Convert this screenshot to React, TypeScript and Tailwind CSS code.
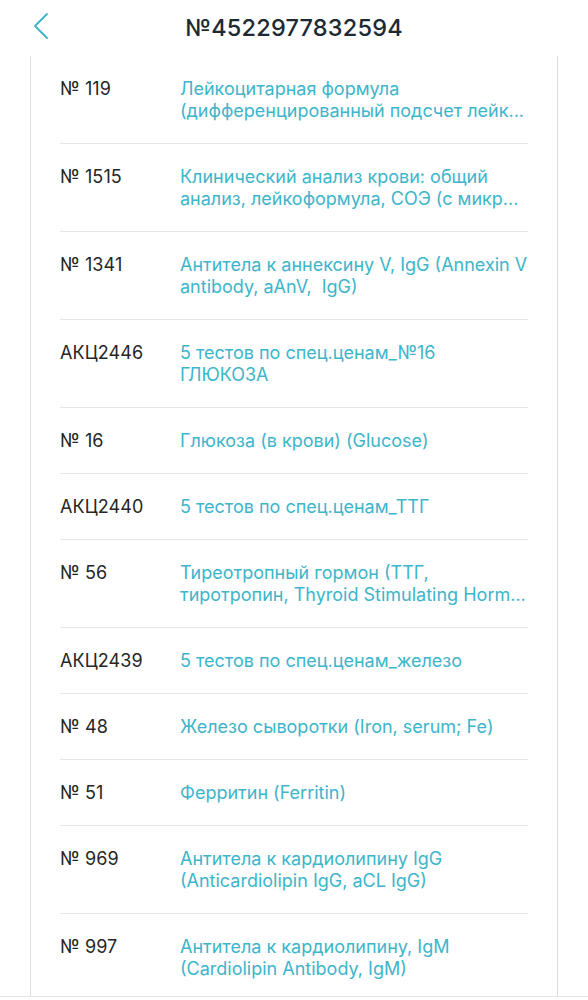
type Item = { code: string; lines: string[] }

const ITEMS: Item[] = [
  { code: "№ 119", lines: ["Лейкоцитарная формула", "(дифференцированный подсчет лейк..."] },
  { code: "№ 1515", lines: ["Клинический анализ крови: общий", "анализ, лейкоформула, СОЭ (с микр..."] },
  { code: "№ 1341", lines: ["Антитела к аннексину V, IgG (Annexin V", "antibody, aAnV,  IgG)"] },
  { code: "АКЦ2446", lines: ["5 тестов по спец.ценам_№16", "ГЛЮКОЗА"] },
  { code: "№ 16", lines: ["Глюкоза (в крови) (Glucose)"] },
  { code: "АКЦ2440", lines: ["5 тестов по спец.ценам_ТТГ"] },
  { code: "№ 56", lines: ["Тиреотропный гормон (ТТГ,", "тиротропин, Thyroid Stimulating Horm..."] },
  { code: "АКЦ2439", lines: ["5 тестов по спец.ценам_железо"] },
  { code: "№ 48", lines: ["Железо сыворотки (Iron, serum; Fe)"] },
  { code: "№ 51", lines: ["Ферритин (Ferritin)"] },
  { code: "№ 969", lines: ["Антитела к кардиолипину IgG", "(Anticardiolipin IgG, aCL IgG)"] },
  { code: "№ 997", lines: ["Антитела к кардиолипину, IgM", "(Cardiolipin Antibody, IgM)"] },
]

export default function App() {
  return (
    <div className="h-[1000px] flex flex-col bg-white overflow-hidden" style={{ fontFamily: "Inter, 'Noto Sans', sans-serif" }}>
      {/* Header */}
      <div className="h-[56px] shrink-0 flex items-center relative">
        <button className="absolute left-[30px] top-[12px] text-[#3bb3c9]">
          <svg width="22" height="28" viewBox="0 0 22 28" fill="none" stroke="currentColor" strokeWidth="1.8" strokeLinecap="round" strokeLinejoin="round">
            <path d="M17 2 L5 14 L17 26" />
          </svg>
        </button>
        <h1 className="w-full text-center text-[23.5px] font-medium text-[#1b2a33] tracking-[0.2px]">№4522977832594</h1>
      </div>

      {/* List */}
      <div className="flex-1 overflow-hidden">
        <div className="mx-[30px] border-x border-[#dedede] px-[29px]">
          {ITEMS.map((it, i) => (
            <div key={i} className="flex pt-[22px] pb-[21px] border-b border-[#e6e6e6]">
              <div className="w-[120px] shrink-0 text-[18px] leading-[22px] text-[#262626] font-normal tracking-[0.1px]">{it.code}</div>
              <div className="flex-1 text-[18px] leading-[22px] text-[#3db5ca]">
                {it.lines.map((l, j) => (
                  <div key={j} className="whitespace-pre">{l}</div>
                ))}
              </div>
            </div>
          ))}
        </div>
      </div>

      {/* Bottom edge */}
      <div className="h-[4px] shrink-0 border-t border-[#e3e3e3] bg-white" />
    </div>
  )
}
